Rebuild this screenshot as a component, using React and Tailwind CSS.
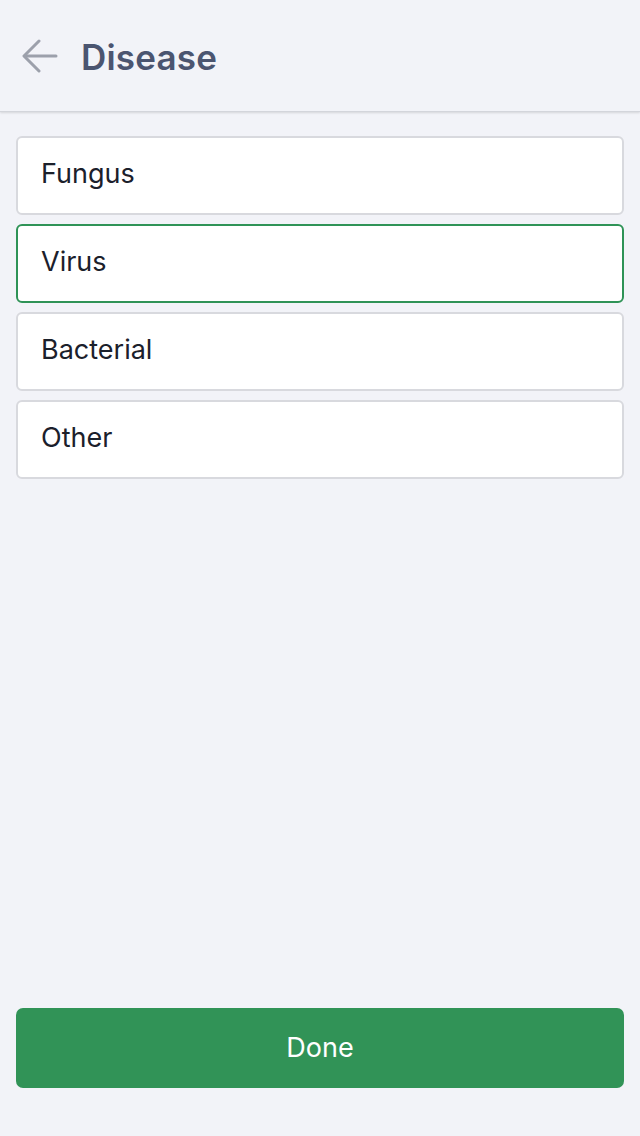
import React, { useState } from 'react';

const OPTIONS = ['Fungus', 'Virus', 'Bacterial', 'Other'];

export default function App() {
    const [selected, setSelected] = useState('Virus');

    return (
        <div className="w-[640px] h-[1136px] bg-[#f2f3f8] flex flex-col font-['Inter',sans-serif]">
            {/* Header */}
            <div className="h-[112px] flex items-center px-[22px] border-b border-[#d3d5db] shadow-[0_1px_2px_rgba(0,0,0,0.12)]">
                <svg width="36" height="34" viewBox="0 0 36 34" fill="none" stroke="#9ca0ab" strokeWidth="3" strokeLinecap="round" strokeLinejoin="round" className="mt-[1px]">
                    <path d="M34 17H3" />
                    <path d="M17 2L2 17l15 15" />
                </svg>
                <h1 className="ml-[23px] text-[35px] font-semibold text-[#4b5570] tracking-[0.2px] mt-[3px]">Disease</h1>
            </div>

            {/* Options */}
            <div className="flex flex-col gap-[9px] px-4 pt-[24px]">
                {OPTIONS.map((opt) => (
                    <button
                        key={opt}
                        onClick={() => setSelected(opt)}
                        className={
                            selected === opt
                                ? 'h-[79px] bg-white rounded-md border-2 border-[#2f9357] text-left pl-[23px] pb-[2px] text-[27px] text-[#1b202b]'
                                : 'h-[79px] bg-white rounded-md border-2 border-[#d8d9de] text-left pl-[23px] pb-[2px] text-[27px] text-[#1b202b]'
                        }
                    >
                        {opt}
                    </button>
                ))}
            </div>

            <div className="flex-1" />

            <div className="px-4 pb-[48px]">
                <button className="w-full h-[80px] bg-[#319357] rounded-[7px] text-white text-[27px]">Done</button>
            </div>
        </div>
    );
}
